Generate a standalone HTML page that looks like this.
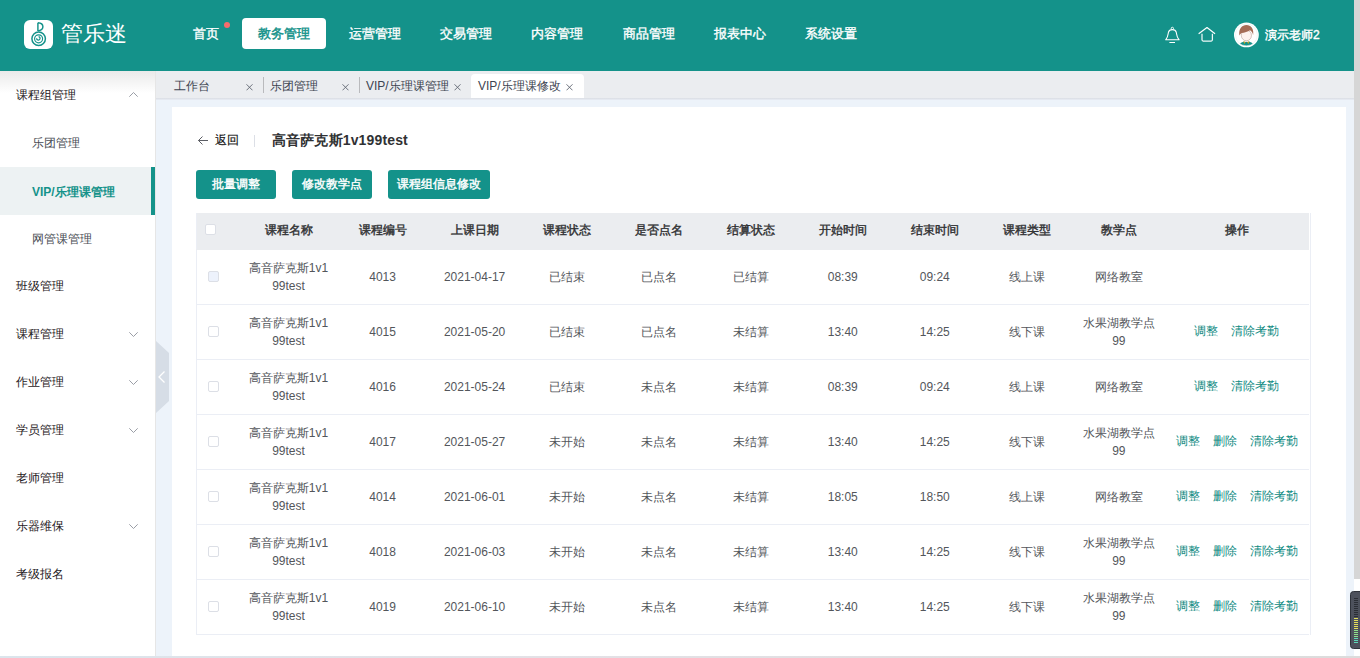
<!DOCTYPE html>
<html><head><meta charset="utf-8">
<style>
*{box-sizing:border-box;margin:0;padding:0}
html,body{width:1360px;height:658px;overflow:hidden}
body{position:relative;background:#edf3fa;font-family:"Liberation Sans",sans-serif;font-size:12px;color:#606266}
.abs{position:absolute}
#hdr{left:0;top:0;width:1354px;height:71px;background:#14928a}
#logo{left:24px;top:20px;width:29px;height:29px;background:#fff;border-radius:6px}
#logotxt{left:61px;top:20px;font-size:22px;color:#fff;letter-spacing:0px;line-height:28px}
.nav{top:18px;height:31px;line-height:31px;font-size:13px;font-weight:normal;-webkit-text-stroke:0.35px #fff;color:#fff;padding:0 16px;border-radius:4px;white-space:nowrap}
.nav.on{background:#fff;color:#14928a;-webkit-text-stroke:0.45px #14928a}
#dot{left:224px;top:22px;width:6px;height:6px;border-radius:50%;background:#f56c6c}
#uname{left:1265px;top:27px;font-size:12px;font-weight:normal;-webkit-text-stroke:0.4px #fff;color:#fff;line-height:16px}
#side{left:0;top:71px;width:156px;height:587px;background:#fff;border-right:1px solid #e6e6e6}
#sideShadow{left:0;top:71px;width:155px;height:22px;background:linear-gradient(#eaeaea,rgba(255,255,255,0))}
.mi{left:0;width:155px;height:48px;line-height:48px;font-size:12px;color:#1f2023;padding-left:16px;white-space:nowrap}
.mi.sub{padding-left:32px;color:#4a4d55}
.mi.act{background:#edf2f3;color:#14928a;font-weight:bold;line-height:50px}
.mi.act:after{content:"";position:absolute;right:0;top:0;width:4px;height:48px;background:#14928a}
.arr{position:absolute;left:129px;top:22px;width:9px;height:5px}
#tabs{left:156px;top:71px;width:1198px;height:27px;background:#ebedf0;}
#tabsh{left:156px;top:98px;width:1198px;height:2px;background:linear-gradient(#dadde3,#e9edf5)}
.tab{top:73px;height:27px;line-height:27px;font-size:12px;color:#3d4451;white-space:nowrap}
.sep{top:6px;width:1px;height:16px;background:#b9babd}
.x{position:absolute;width:7px;height:7px}
#toggle{left:156px;top:341px;width:13px;height:72px}
#card{left:172px;top:107px;width:1174px;height:560px;background:#fff}
#back{left:197px;top:132px;font-size:12px;color:#111;line-height:16px;-webkit-text-stroke:0.15px #111}
#vsep{left:254px;top:135px;width:1px;height:12px;background:#dcdfe6}
#title{left:272px;top:131px;font-size:14px;font-weight:bold;color:#303133;line-height:18px;letter-spacing:0.15px}
.btn{top:170px;height:29px;line-height:29px;background:#14928a;color:#fff;font-size:12px;font-weight:normal;-webkit-text-stroke:0.4px #fff;border-radius:3px;text-align:center;white-space:nowrap}
#tbl{left:196px;top:213px;width:1113px;border-collapse:collapse;table-layout:fixed;border-left:1px solid #ebeef5}
#tblr{left:1310px;top:213px;width:1px;height:422px;background:#ebeef5}
#tbl th{height:36px;border-bottom:1px solid #ebedf0;background:#ebedf0;color:#303133;font-weight:normal;-webkit-text-stroke:0.4px #303133;font-size:12px;text-align:center;padding:0}
#tbl td{height:55px;border-bottom:1px solid #ebeef5;text-align:center;font-size:12px;color:#53565b;line-height:18px;padding:0}
.cb{display:inline-block;width:11px;height:11px;border:1px solid #dcdfe6;border-radius:2px;background:#fff;vertical-align:middle}
.cb.dis{background:#edf2fc}
.lk{color:#0e8a82;position:relative;top:-1px}
.lk+.lk{margin-left:13px}
#sb{left:1354px;top:0;width:6px;height:579px;background:#d6d6d6}
#sbt{left:1354px;top:579px;width:6px;height:79px;background:#fff}
#widget{left:1350px;top:591px;width:14px;height:58px;background:#4a4e59;border-radius:4px;border:1px solid #2f323a}
#bot{left:0;top:656px;width:1360px;height:2px;background:linear-gradient(90deg,#dbe5ec,#e3e1e6 40%,#dcdcdc)}
</style></head><body>
<div id="hdr" class="abs"></div>
<div id="logo" class="abs"><svg width="29" height="29" viewBox="0 0 29 29"><path d="M13.9 2.7 L13.9 11 M13.9 2.7 C17.4 2.9 18.9 5 18.9 6.8 C18.9 8.7 17.4 10.5 13.9 10.9" fill="none" stroke="#14928a" stroke-width="1.45"/><circle cx="14.65" cy="18.7" r="6.75" fill="none" stroke="#14928a" stroke-width="1.5"/><circle cx="14.6" cy="18.8" r="4.0" fill="none" stroke="#14928a" stroke-width="1.15"/><path d="M12.6 18.2 A1.75 1.75 0 1 0 14.6 16.6" fill="none" stroke="#14928a" stroke-width="1.25"/></svg></div>
<div id="logotxt" class="abs">管乐迷</div>
<div class="abs nav" style="left:177px">首页</div>
<div id="dot" class="abs"></div>
<div class="abs nav on" style="left:242px">教务管理</div>
<div class="abs nav" style="left:333px">运营管理</div>
<div class="abs nav" style="left:424px">交易管理</div>
<div class="abs nav" style="left:515px">内容管理</div>
<div class="abs nav" style="left:607px">商品管理</div>
<div class="abs nav" style="left:698px">报表中心</div>
<div class="abs nav" style="left:789px">系统设置</div>
<svg class="abs" style="left:1160px;top:22px" width="60" height="26" viewBox="0 0 60 26"><circle cx="12.35" cy="6.4" r="1.15" fill="none" stroke="#fff" stroke-width="0.9"/><path d="M5.7 17.8 C7.4 15.6 7.9 14 8.1 12 L8.5 10.2 C8.9 8.4 10.4 7.6 12.35 7.6 C14.3 7.6 15.8 8.4 16.2 10.2 L16.6 12 C16.8 14 17.3 15.6 19.1 17.8 Z" fill="none" stroke="#fff" stroke-width="1.1" stroke-linejoin="round"/><path d="M9.4 20.5 L15 20.5" stroke="#fff" stroke-width="1"/><path d="M39 11.5 L47 5.6 L54.7 11.5" fill="none" stroke="#fff" stroke-width="1.2" stroke-linecap="round" stroke-linejoin="round"/><path d="M42 11.8 L42 17.8 Q42 19 43.2 19 L51.2 19 Q52.4 19 52.4 17.8 L52.4 11.8" fill="none" stroke="#eef8f7" stroke-width="1.25"/></svg>
<svg class="abs" style="left:1230px;top:19px" width="32" height="32" viewBox="0 0 32 32"><circle cx="16.4" cy="15.9" r="12.4" fill="#fff"/><defs><clipPath id="cp"><circle cx="16.4" cy="15.9" r="10.9"/></clipPath></defs><g clip-path="url(#cp)"><path d="M8.5 27 Q9.5 22.6 16.4 22.4 Q23.3 22.6 24.3 27 Z" fill="#14928a"/><path d="M13.1 22.2 L14.6 25 L15.5 23.1 Z M19.7 22.2 L18.2 25 L17.3 23.1 Z" fill="#d9a21b"/><path d="M14.8 20.8 L14.8 23 L18 23 L18 20.8 Z" fill="#f6e3df"/><ellipse cx="16.4" cy="16.4" rx="5.1" ry="5.4" fill="#fdf1ee" stroke="#8a6a60" stroke-width="0.35"/><path d="M9.4 16.6 C8.4 10 12 6.1 16.4 6.1 C21 6.1 24.2 10 23.1 16.2 C22.6 13.4 21.4 11.8 20 11.2 C18 12.8 14.5 13.6 11.4 14 C10.5 14.8 9.9 15.6 9.4 16.6 Z" fill="#a56c56"/></g><circle cx="16.4" cy="15.9" r="10.9" fill="none" stroke="#dceeed" stroke-width="0.5"/></svg>
<div id="uname" class="abs">演示老师2</div>

<div id="side" class="abs"></div>
<div id="sideShadow" class="abs"></div>
<div class="abs mi" style="top:71px">课程组管理<svg class="arr" style="top:21px" viewBox="0 0 9 5"><path d="M0.3 4.7 L4.5 0.5 L8.7 4.7" fill="none" stroke="#8e939c" stroke-width="0.9"/></svg></div>
<div class="abs mi sub" style="top:119px">乐团管理</div>
<div class="abs mi sub act" style="top:167px">VIP/乐理课管理</div>
<div class="abs mi sub" style="top:215px">网管课管理</div>
<div class="abs mi" style="top:262px">班级管理</div>
<div class="abs mi" style="top:310px">课程管理<svg class="arr" viewBox="0 0 9 5"><path d="M0.3 0.3 L4.5 4.5 L8.7 0.3" fill="none" stroke="#8e939c" stroke-width="0.9"/></svg></div>
<div class="abs mi" style="top:358px">作业管理<svg class="arr" viewBox="0 0 9 5"><path d="M0.3 0.3 L4.5 4.5 L8.7 0.3" fill="none" stroke="#8e939c" stroke-width="0.9"/></svg></div>
<div class="abs mi" style="top:406px">学员管理<svg class="arr" viewBox="0 0 9 5"><path d="M0.3 0.3 L4.5 4.5 L8.7 0.3" fill="none" stroke="#8e939c" stroke-width="0.9"/></svg></div>
<div class="abs mi" style="top:454px">老师管理</div>
<div class="abs mi" style="top:502px">乐器维保<svg class="arr" viewBox="0 0 9 5"><path d="M0.3 0.3 L4.5 4.5 L8.7 0.3" fill="none" stroke="#8e939c" stroke-width="0.9"/></svg></div>
<div class="abs mi" style="top:550px">考级报名</div>

<div id="tabs" class="abs"></div>
<div id="tabsh" class="abs"></div>
<div class="abs tab" style="left:174px">工作台</div>
<svg class="abs" style="left:246px;top:84px" width="7" height="7" viewBox="0 0 7 7"><path d="M0.5 0.3 L6.5 6.3 M6.5 0.3 L0.5 6.3" stroke="#5f6470" stroke-width="0.9"/></svg>
<div class="abs sep" style="left:263px;top:77px"></div>
<div class="abs tab" style="left:270px">乐团管理</div>
<svg class="abs" style="left:342px;top:84px" width="7" height="7" viewBox="0 0 7 7"><path d="M0.5 0.3 L6.5 6.3 M6.5 0.3 L0.5 6.3" stroke="#5f6470" stroke-width="0.9"/></svg>
<div class="abs sep" style="left:359px;top:77px"></div>
<div class="abs tab" style="left:366px">VIP/乐理课管理</div>
<svg class="abs" style="left:454px;top:84px" width="7" height="7" viewBox="0 0 7 7"><path d="M0.5 0.3 L6.5 6.3 M6.5 0.3 L0.5 6.3" stroke="#5f6470" stroke-width="0.9"/></svg>
<div class="abs" style="left:471px;top:74px;width:113px;height:24px;background:#fff;border-radius:4px 4px 0 0"></div>
<div class="abs tab" style="left:478px">VIP/乐理课修改</div>
<svg class="abs" style="left:566px;top:84px" width="7" height="7" viewBox="0 0 7 7"><path d="M0.5 0.3 L6.5 6.3 M6.5 0.3 L0.5 6.3" stroke="#5f6470" stroke-width="0.9"/></svg>

<svg id="toggle" class="abs" viewBox="0 0 13 72"><path d="M0 0 L13 12 L13 60 L0 72 Z" fill="#d6dde6"/><path d="M8.5 30.5 L3 36 L8.5 41.5" fill="none" stroke="#fff" stroke-width="1.3"/></svg>

<div id="card" class="abs"></div>
<svg class="abs" style="left:197px;top:135px" width="12" height="11" viewBox="0 0 12 11"><path d="M11 5.5 L1.5 5.5 M5.5 1.5 L1.5 5.5 L5.5 9.5" fill="none" stroke="#4a4c52" stroke-width="0.9"/></svg>
<div id="back" class="abs" style="left:215px">返回</div>
<div id="vsep" class="abs"></div>
<div id="title" class="abs">高音萨克斯1v199test</div>
<div class="abs btn" style="left:196px;width:80px">批量调整</div>
<div class="abs btn" style="left:292px;width:80px">修改教学点</div>
<div class="abs btn" style="left:388px;width:102px">课程组信息修改</div>

<table id="tbl" class="abs">
<colgroup><col style="width:44px"><col style="width:96px"><col style="width:92px"><col style="width:92px"><col style="width:92px"><col style="width:92px"><col style="width:92px"><col style="width:92px"><col style="width:92px"><col style="width:92px"><col style="width:92px"><col style="width:144px"></colgroup>
<tr><th style="text-align:left;padding-left:8px"><span class="cb" style="position:relative;top:-2px"></span></th><th>课程名称</th><th>课程编号</th><th>上课日期</th><th>课程状态</th><th>是否点名</th><th>结算状态</th><th>开始时间</th><th>结束时间</th><th>课程类型</th><th>教学点</th><th>操作</th></tr>
<tr><td style="text-align:left;padding-left:11px"><span class="cb dis" style="position:relative;top:-1px"></span></td><td>高音萨克斯1v1<br>99test</td><td>4013</td><td>2021-04-17</td><td>已结束</td><td>已点名</td><td>已结算</td><td>08:39</td><td>09:24</td><td>线上课</td><td>网络教室</td><td></td></tr>
<tr><td style="text-align:left;padding-left:11px"><span class="cb" style="position:relative;top:-1px"></span></td><td>高音萨克斯1v1<br>99test</td><td>4015</td><td>2021-05-20</td><td>已结束</td><td>已点名</td><td>未结算</td><td>13:40</td><td>14:25</td><td>线下课</td><td>水果湖教学点<br>99</td><td><span class="lk">调整</span><span class="lk">清除考勤</span></td></tr>
<tr><td style="text-align:left;padding-left:11px"><span class="cb" style="position:relative;top:-1px"></span></td><td>高音萨克斯1v1<br>99test</td><td>4016</td><td>2021-05-24</td><td>已结束</td><td>未点名</td><td>未结算</td><td>08:39</td><td>09:24</td><td>线上课</td><td>网络教室</td><td><span class="lk">调整</span><span class="lk">清除考勤</span></td></tr>
<tr><td style="text-align:left;padding-left:11px"><span class="cb" style="position:relative;top:-1px"></span></td><td>高音萨克斯1v1<br>99test</td><td>4017</td><td>2021-05-27</td><td>未开始</td><td>未点名</td><td>未结算</td><td>13:40</td><td>14:25</td><td>线下课</td><td>水果湖教学点<br>99</td><td><span class="lk">调整</span><span class="lk">删除</span><span class="lk">清除考勤</span></td></tr>
<tr><td style="text-align:left;padding-left:11px"><span class="cb" style="position:relative;top:-1px"></span></td><td>高音萨克斯1v1<br>99test</td><td>4014</td><td>2021-06-01</td><td>未开始</td><td>未点名</td><td>未结算</td><td>18:05</td><td>18:50</td><td>线上课</td><td>网络教室</td><td><span class="lk">调整</span><span class="lk">删除</span><span class="lk">清除考勤</span></td></tr>
<tr><td style="text-align:left;padding-left:11px"><span class="cb" style="position:relative;top:-1px"></span></td><td>高音萨克斯1v1<br>99test</td><td>4018</td><td>2021-06-03</td><td>未开始</td><td>未点名</td><td>未结算</td><td>13:40</td><td>14:25</td><td>线下课</td><td>水果湖教学点<br>99</td><td><span class="lk">调整</span><span class="lk">删除</span><span class="lk">清除考勤</span></td></tr>
<tr><td style="text-align:left;padding-left:11px"><span class="cb" style="position:relative;top:-1px"></span></td><td>高音萨克斯1v1<br>99test</td><td>4019</td><td>2021-06-10</td><td>未开始</td><td>未点名</td><td>未结算</td><td>13:40</td><td>14:25</td><td>线下课</td><td>水果湖教学点<br>99</td><td><span class="lk">调整</span><span class="lk">删除</span><span class="lk">清除考勤</span></td></tr>
</table>

<div id="tblr" class="abs"></div>
<div id="sb" class="abs"></div>
<div id="sbt" class="abs"></div>
<svg class="abs" style="left:1350px;top:591px" width="10" height="58" viewBox="0 0 10 58"><rect x="0.5" y="0.5" width="14" height="57" rx="3" fill="#4d515c" stroke="#2f323a"/><rect x="4" y="7" width="4" height="1" fill="#2b2e35"/><rect x="4" y="9" width="4" height="1" fill="#2b2e35"/><rect x="4" y="11" width="4" height="1" fill="#2b2e35"/><rect x="4" y="13" width="4" height="1" fill="#2b2e35"/><rect x="4" y="15" width="4" height="1" fill="#2b2e35"/><rect x="4" y="17" width="4" height="1" fill="#2b2e35"/><rect x="4" y="19" width="4" height="1" fill="#2b2e35"/><rect x="4" y="21" width="4" height="1" fill="#2b2e35"/><rect x="4" y="23" width="4" height="1" fill="#2b2e35"/><rect x="4" y="25" width="4" height="1" fill="#2b2e35"/><rect x="4" y="27" width="4" height="1" fill="#e3df5a"/><rect x="4" y="29" width="4" height="1" fill="#e3df5a"/><rect x="4" y="31" width="4" height="1" fill="#e3df5a"/><rect x="4" y="33" width="4" height="1" fill="#e3df5a"/><rect x="4" y="35" width="4" height="1" fill="#e3df5a"/><rect x="4" y="37" width="4" height="1" fill="#e3df5a"/><rect x="4" y="39" width="4" height="1" fill="#8fe08a"/><rect x="4" y="41" width="4" height="1" fill="#8fe08a"/><rect x="4" y="43" width="4" height="1" fill="#8fe08a"/><rect x="4" y="45" width="4" height="1" fill="#8fe08a"/><rect x="4" y="47" width="4" height="1" fill="#5fd8b8"/><rect x="4" y="49" width="4" height="1" fill="#5fd8b8"/><rect x="4" y="51" width="4" height="1" fill="#5fd8b8"/></svg>
<div id="bot" class="abs"></div>
</body></html>
